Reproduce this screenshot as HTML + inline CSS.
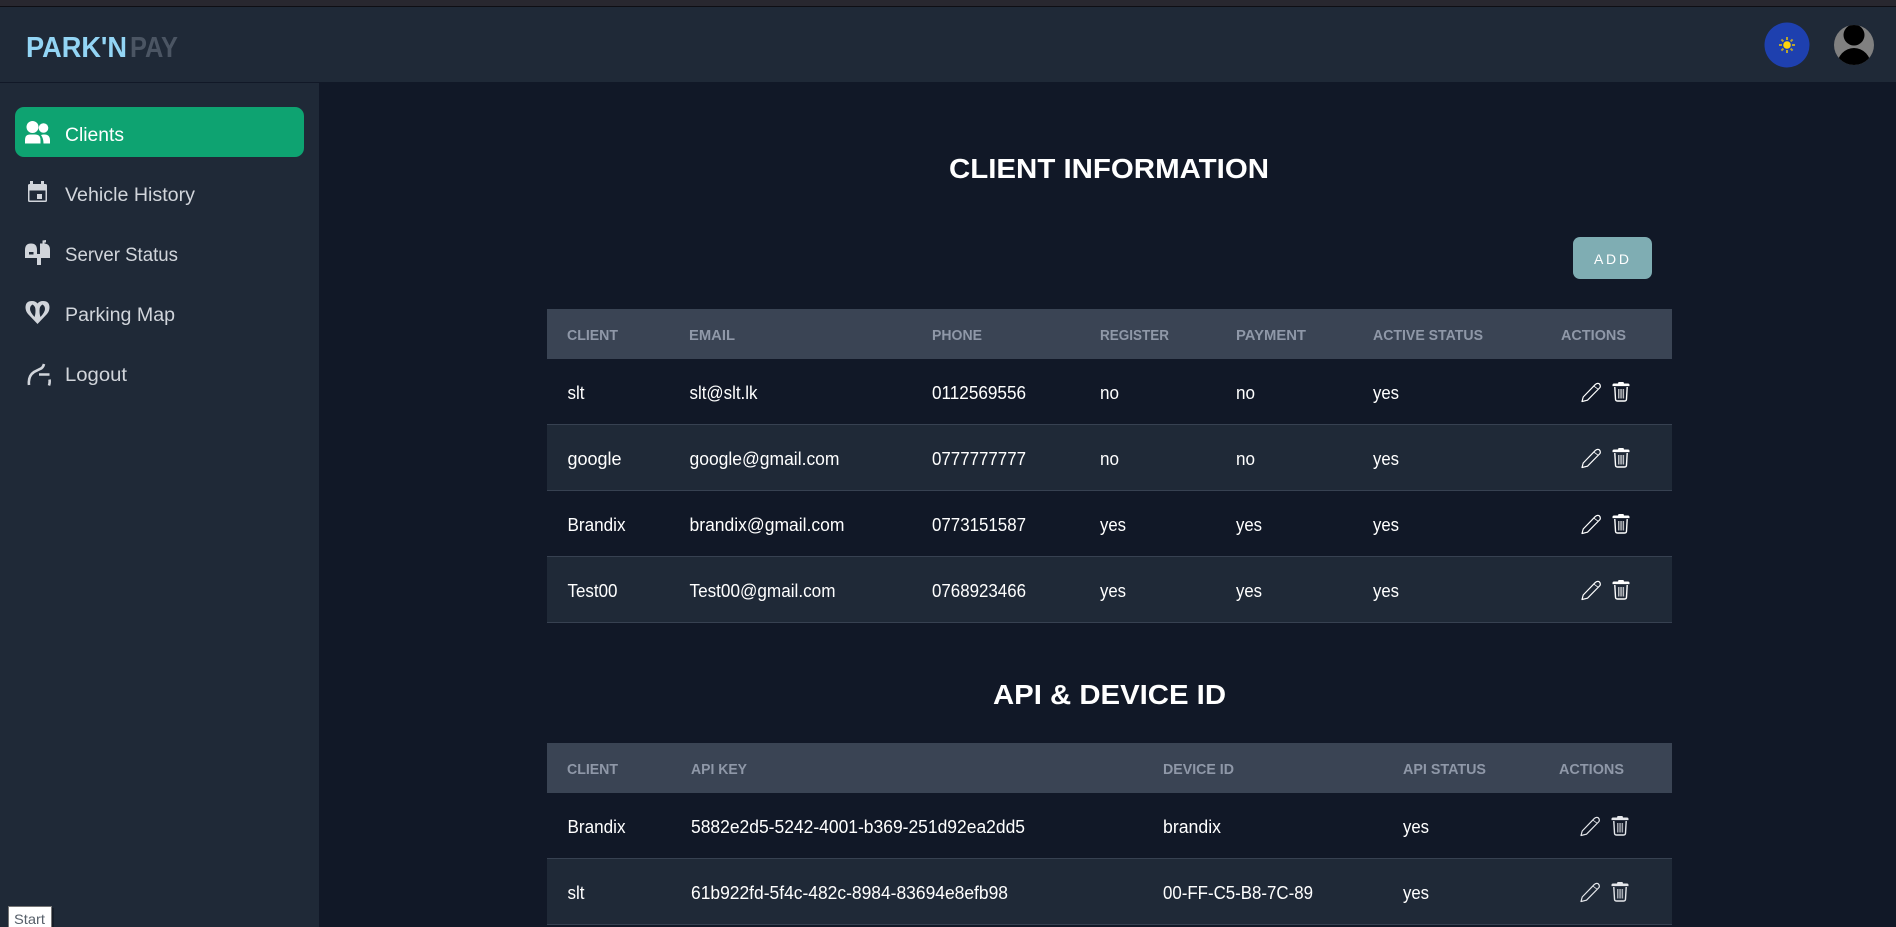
<!DOCTYPE html>
<html lang="en">
<head>
<meta charset="utf-8">
<title>Park'n Pay</title>
<style>
html,body{margin:0;padding:0;background:#111827;width:1896px;height:927px;overflow:hidden}
svg{display:block}
text{font-family:"Liberation Sans",Arial,sans-serif}
.nav{font-size:19px;fill:#d1d5db}
.th{font-size:14.5px;font-weight:700;fill:#8f98a8}
.td{font-size:18px;fill:#fff}
.ttl{font-size:28px;font-weight:700;fill:#fff}
</style>
</head>
<body>
<svg xmlns="http://www.w3.org/2000/svg" width="1896" height="927" viewBox="0 0 1896 927">
<defs>
<g id="pen" fill="none" stroke="currentColor" stroke-width="1.2" stroke-linejoin="round">
<path d="M1 19.500 2.200 15 14.200 2.600Q16 .8 18 1.600 20 3.200 19 5.500L6.500 18.200Z"/>
<path d="M13 4.200 17.400 7.400" stroke-width=".8"/>
</g>
<g id="bin">
<path d="M6 0h5l.5 1.500H15.500q1.500 0 1.500 1.500v1.100H0V3q0-1.500 1.500-1.500H5.500Z" fill="currentColor"/>
<path d="M2.300 5 3 17q0 2 2 2h7q2 0 2-2L14.700 5" fill="none" stroke="currentColor" stroke-width="1.400"/>
<path d="M5.500 7h1.500v9.500H5.500ZM7.800 7h1.500v9.500H7.800ZM10.100 7h1.500v9.500h-1.500Z" fill="currentColor" opacity=".7"/>
</g>
<clipPath id="av"><circle cx="1854" cy="45" r="20"/></clipPath>
</defs>

<!-- backgrounds -->
<rect width="1896" height="927" fill="#111827"/>
<rect width="1896" height="6" fill="#28272f"/>
<rect y="6" width="1896" height="1" fill="#0e0e14"/>
<rect y="7" width="1896" height="75" fill="#1f2937"/>
<rect y="82" width="1896" height="1" fill="#111827"/>
<rect y="83" width="319" height="844" fill="#1f2937"/>

<!-- logo -->
<text x="26" y="57" font-size="29" font-weight="700" fill="#93d5f5" textLength="101" lengthAdjust="spacingAndGlyphs">PARK'N</text>
<text x="130" y="57" font-size="29" font-weight="700" fill="#4b5563" textLength="48" lengthAdjust="spacingAndGlyphs">PAY</text>

<!-- theme toggle -->
<circle cx="1787" cy="45" r="22.500" fill="#1e40af"/>
<g stroke="#b8a432" stroke-width="2">
<path d="M1787 37v3M1787 50v3M1779 45h3M1792 45h3M1781.400 39.400l2 2M1790.600 48.600l2 2M1792.600 39.400l-2 2M1783.400 48.600l-2 2"/>
</g>
<circle cx="1787" cy="45" r="3.800" fill="#ffd60a"/>

<!-- avatar -->
<circle cx="1854" cy="45" r="20" fill="#808080"/>
<g clip-path="url(#av)" fill="#000">
<circle cx="1854" cy="35" r="10.500"/>
<ellipse cx="1854" cy="66" rx="17" ry="18"/>
</g>

<!-- sidebar -->
<rect x="15" y="107" width="289" height="50" rx="9" fill="#0ea371"/>
<!-- clients icon -->
<g fill="#fff">
<circle cx="43.500" cy="128" r="4.800"/>
<path d="M43 134.500h1.500q5.500 0 5.500 6V143.500h-6.500q0-5-2.500-8.500Z"/>
<circle cx="32.500" cy="127" r="6"/>
<path d="M25 143.500v-3.500q0-5.500 5-5.500h5q5.500 0 5.500 5.500v3.500Z"/>
</g>
<text x="65" y="141" class="nav" style="fill:#fff" textLength="59" lengthAdjust="spacingAndGlyphs">Clients</text>

<!-- calendar -->
<path d="M30 181h3v3h8v-3h3v3h1.500q1.500 0 1.500 1.500V200.500q0 1.500-1.500 1.500h-16q-1.500 0-1.500-1.500V185.500q0-1.500 1.500-1.500H30ZM29.500 190.500V200.500H45.500V190.500Z" fill="#d1d5db" fill-rule="evenodd"/>
<rect x="37" y="194" width="5" height="5" fill="#d1d5db"/>
<text x="65" y="201" class="nav" textLength="130" lengthAdjust="spacingAndGlyphs">Vehicle History</text>

<!-- mailbox -->
<g fill="#d1d5db">
<path d="M25 258V250q0-6.500 6-6.500T37 250v8Z"/>
<path d="M37 254h3v-10.500h2.500V240.500l3.500-.5v2.500h-1.500v1q5.500.5 5.500 6.500v8H41v7H37Z"/>
</g>
<rect x="29" y="252" width="4.500" height="2.500" fill="#1f2937"/>
<text x="65" y="261" class="nav" textLength="113" lengthAdjust="spacingAndGlyphs">Server Status</text>

<!-- heart -->
<path d="M37.500 324 28 314q-2.500-3-2.500-6.500 0-6.500 6.500-6.500 3.500 0 5.500 2.500 2-2.500 5.500-2.500 6.500 0 6.500 6.500 0 3.500-2.500 6.500Z" fill="#d1d5db"/>
<path d="M32.500 304.500q-2.500 1.500-2.500 4.500 0 3 4.500 8 1-2.500 1-6.500 0-4.500-3-6ZM42.500 304.500q2.500 1.500 2.500 4.500 0 3-4.500 8-1-2.500-1-6.500 0-4.500 3-6Z" fill="#1f2937"/>
<text x="65" y="321" class="nav" textLength="110" lengthAdjust="spacingAndGlyphs">Parking Map</text>

<!-- logout -->
<g fill="none" stroke="#d1d5db" stroke-width="2.600">
<path d="M29 385q-1-9 5-13 4-2 6-3 3-1 4-5"/>
<path d="M39 374.500h10.500M49.500 379.500q.5 3-.5 6"/>
</g>
<text x="65" y="381" class="nav" textLength="62" lengthAdjust="spacingAndGlyphs">Logout</text>

<!-- start tooltip -->
<rect x="10" y="908" width="44" height="21" fill="#000" opacity=".25"/>
<rect x="8.500" y="906.500" width="43" height="24" fill="#fff" stroke="#767676"/>
<text x="14" y="924" font-size="14" fill="#57606a" textLength="31" lengthAdjust="spacingAndGlyphs">Start</text>

<!-- section 1 -->
<text x="949" y="178" class="ttl" textLength="320" lengthAdjust="spacingAndGlyphs">CLIENT INFORMATION</text>

<rect x="1573" y="237" width="79" height="42" rx="7" fill="#7fadb3"/>
<text x="1594" y="264" font-size="14" fill="#fff" textLength="35">ADD</text>

<!-- table 1 -->
<rect x="547" y="309" width="1125" height="50" fill="#3a4454"/>
<text x="567" y="340" class="th" textLength="51" lengthAdjust="spacingAndGlyphs">CLIENT</text>
<text x="689" y="340" class="th" textLength="46" lengthAdjust="spacingAndGlyphs">EMAIL</text>
<text x="932" y="340" class="th" textLength="50" lengthAdjust="spacingAndGlyphs">PHONE</text>
<text x="1100" y="340" class="th" textLength="69" lengthAdjust="spacingAndGlyphs">REGISTER</text>
<text x="1236" y="340" class="th" textLength="70" lengthAdjust="spacingAndGlyphs">PAYMENT</text>
<text x="1373" y="340" class="th" textLength="110" lengthAdjust="spacingAndGlyphs">ACTIVE STATUS</text>
<text x="1561" y="340" class="th" textLength="65" lengthAdjust="spacingAndGlyphs">ACTIONS</text>

<rect x="547" y="425" width="1125" height="65" fill="#1f2937"/>
<rect x="547" y="557" width="1125" height="65" fill="#1f2937"/>
<g fill="#374151">
<rect x="547" y="424" width="1125" height="1"/>
<rect x="547" y="490" width="1125" height="1"/>
<rect x="547" y="556" width="1125" height="1"/>
<rect x="547" y="622" width="1125" height="1"/>
</g>

<text x="567.500" y="399" class="td" textLength="17" lengthAdjust="spacingAndGlyphs">slt</text>
<text x="689.500" y="399" class="td" textLength="68" lengthAdjust="spacingAndGlyphs">slt@slt.lk</text>
<text x="932" y="399" class="td" textLength="94" lengthAdjust="spacingAndGlyphs">0112569556</text>
<text x="1100" y="399" class="td" textLength="19" lengthAdjust="spacingAndGlyphs">no</text>
<text x="1236" y="399" class="td" textLength="19" lengthAdjust="spacingAndGlyphs">no</text>
<text x="1373" y="399" class="td" textLength="26" lengthAdjust="spacingAndGlyphs">yes</text>

<text x="567.500" y="465" class="td" textLength="54" lengthAdjust="spacingAndGlyphs">google</text>
<text x="689.500" y="465" class="td" textLength="150" lengthAdjust="spacingAndGlyphs">google@gmail.com</text>
<text x="932" y="465" class="td" textLength="94" lengthAdjust="spacingAndGlyphs">0777777777</text>
<text x="1100" y="465" class="td" textLength="19" lengthAdjust="spacingAndGlyphs">no</text>
<text x="1236" y="465" class="td" textLength="19" lengthAdjust="spacingAndGlyphs">no</text>
<text x="1373" y="465" class="td" textLength="26" lengthAdjust="spacingAndGlyphs">yes</text>

<text x="567.500" y="531" class="td" textLength="58" lengthAdjust="spacingAndGlyphs">Brandix</text>
<text x="689.500" y="531" class="td" textLength="155" lengthAdjust="spacingAndGlyphs">brandix@gmail.com</text>
<text x="932" y="531" class="td" textLength="94" lengthAdjust="spacingAndGlyphs">0773151587</text>
<text x="1100" y="531" class="td" textLength="26" lengthAdjust="spacingAndGlyphs">yes</text>
<text x="1236" y="531" class="td" textLength="26" lengthAdjust="spacingAndGlyphs">yes</text>
<text x="1373" y="531" class="td" textLength="26" lengthAdjust="spacingAndGlyphs">yes</text>

<text x="567.500" y="597" class="td" textLength="50" lengthAdjust="spacingAndGlyphs">Test00</text>
<text x="689.500" y="597" class="td" textLength="146" lengthAdjust="spacingAndGlyphs">Test00@gmail.com</text>
<text x="932" y="597" class="td" textLength="94" lengthAdjust="spacingAndGlyphs">0768923466</text>
<text x="1100" y="597" class="td" textLength="26" lengthAdjust="spacingAndGlyphs">yes</text>
<text x="1236" y="597" class="td" textLength="26" lengthAdjust="spacingAndGlyphs">yes</text>
<text x="1373" y="597" class="td" textLength="26" lengthAdjust="spacingAndGlyphs">yes</text>

<g color="#fff">
<use href="#pen" x="1581" y="382"/><use href="#bin" x="1612.500" y="382"/>
<use href="#pen" x="1581" y="448"/><use href="#bin" x="1612.500" y="448"/>
<use href="#pen" x="1581" y="514"/><use href="#bin" x="1612.500" y="514"/>
<use href="#pen" x="1581" y="580"/><use href="#bin" x="1612.500" y="580"/>
</g>

<!-- section 2 -->
<text x="993" y="704" class="ttl" textLength="233" lengthAdjust="spacingAndGlyphs">API &amp; DEVICE ID</text>

<rect x="547" y="743" width="1125" height="50" fill="#3a4454"/>
<text x="567" y="774" class="th" textLength="51" lengthAdjust="spacingAndGlyphs">CLIENT</text>
<text x="691" y="774" class="th" textLength="56" lengthAdjust="spacingAndGlyphs">API KEY</text>
<text x="1163" y="774" class="th" textLength="71" lengthAdjust="spacingAndGlyphs">DEVICE ID</text>
<text x="1403" y="774" class="th" textLength="83" lengthAdjust="spacingAndGlyphs">API STATUS</text>
<text x="1559" y="774" class="th" textLength="65" lengthAdjust="spacingAndGlyphs">ACTIONS</text>

<rect x="547" y="859" width="1125" height="65" fill="#1f2937"/>
<rect x="547" y="858" width="1125" height="1" fill="#374151"/>
<rect x="547" y="924" width="1125" height="1" fill="#374151"/>

<text x="567.500" y="833" class="td" textLength="58" lengthAdjust="spacingAndGlyphs">Brandix</text>
<text x="691" y="833" class="td" textLength="334" lengthAdjust="spacingAndGlyphs">5882e2d5-5242-4001-b369-251d92ea2dd5</text>
<text x="1163" y="833" class="td" textLength="58" lengthAdjust="spacingAndGlyphs">brandix</text>
<text x="1403" y="833" class="td" textLength="26" lengthAdjust="spacingAndGlyphs">yes</text>

<text x="567.500" y="899" class="td" textLength="17" lengthAdjust="spacingAndGlyphs">slt</text>
<text x="691" y="899" class="td" textLength="317" lengthAdjust="spacingAndGlyphs">61b922fd-5f4c-482c-8984-83694e8efb98</text>
<text x="1163" y="899" class="td" textLength="150" lengthAdjust="spacingAndGlyphs">00-FF-C5-B8-7C-89</text>
<text x="1403" y="899" class="td" textLength="26" lengthAdjust="spacingAndGlyphs">yes</text>

<g color="#e5e7eb">
<use href="#pen" x="1580" y="816"/><use href="#bin" x="1611.500" y="816"/>
<use href="#pen" x="1580" y="882"/><use href="#bin" x="1611.500" y="882"/>
</g>
</svg>
</body>
</html>
